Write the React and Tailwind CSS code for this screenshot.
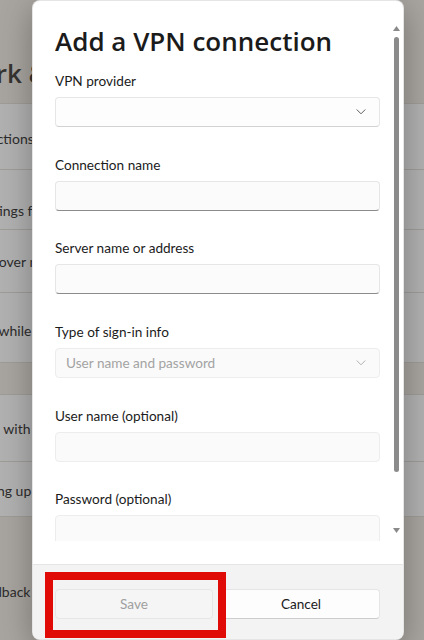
import React from 'react';

const rows = [
    // background settings page (dimmed behind the dialog)
    { text: 'VPN connections', h: 'h-[65px]', pt: 'pt-[25px]', ml: '-ml-[73px]' },
    { text: 'Advanced settings for all VPN connections', h: 'h-[59px]', pt: 'pt-[31px]', ml: '-ml-[88px]' },
    { text: 'Allow VPN over metered networks', h: 'h-[62px]', pt: 'pt-[22px]', ml: '-ml-[71px]' },
    { text: 'Allow VPN while roaming', h: 'h-[69px]', pt: 'pt-[28px]', ml: '-ml-[71px]' },
];

const related = [
    { text: 'Help with VPN', h: 'h-[66px]', pt: 'pt-[24px]', ml: '-ml-[29px]' },
    { text: 'Setting up a VPN', h: 'h-[54px]', pt: 'pt-[19px]', ml: '-ml-[31px]' },
];

function Row({ text, h, pt, ml }) {
    return (
        <div className={`${h} ${pt} bg-[#b2b1b1] overflow-hidden`}>
            <div className={`${ml} whitespace-nowrap text-sm leading-5 text-[#2c2c2c]`}>{text}</div>
        </div>
    );
}

function Chevron({ color = '#5c5c5c' }) {
    return (
        <svg width="10" height="6" viewBox="0 0 10 6" fill="none">
            <path d="M1 0.8 L5 4.8 L9 0.8" stroke={color} strokeWidth="1" strokeLinecap="round" strokeLinejoin="round" />
        </svg>
    );
}

function Field({ label, children }) {
    return (
        <div className="flex flex-col">
            <div className="mb-[6px] text-[13.6px] leading-5 text-[#1b1b1b]">{label}</div>
            {children}
        </div>
    );
}

function TextBox() {
    return <div className="h-[30px] rounded-[4px] border border-[#e6e6e6] border-b-[#8c8c8c] bg-[#fbfbfb]" />;
}

export default function App() {
    return (
        <div className="relative h-[640px] w-[424px] overflow-hidden bg-[#a8a49f] font-['Lato','Open_Sans',sans-serif]">
            {/* Settings page behind */}
            <div className="flex flex-col gap-px bg-[#9f9c98]">
                <div className="h-[103px] overflow-hidden bg-[#a8a49f] pt-[57px]">
                    <div className="-ml-[87px] whitespace-nowrap font-['Open_Sans',sans-serif] text-[26px] font-semibold leading-8 text-[#363431]">
                        Network &amp; internet
                    </div>
                </div>
                {rows.map((r) => (
                    <Row key={r.text} {...r} />
                ))}
                <div className="h-[31px] bg-[#a8a49f]" />
                {related.map((r) => (
                    <Row key={r.text} {...r} />
                ))}
                <div className="h-[123px] overflow-hidden bg-[#a8a49f] pt-[65px]">
                    <div className="-ml-[57px] whitespace-nowrap text-sm leading-5 text-[#2c2c2c]">Give feedback</div>
                </div>
            </div>

            {/* Dialog */}
            <div className="absolute left-[32px] top-0 flex h-[640px] w-[372px] flex-col overflow-hidden rounded-lg border border-black/10 bg-white shadow-[0_8px_32px_rgba(0,0,0,0.3)]">
                <div className="relative h-[540px] overflow-hidden pl-[22px] pr-[23px] pt-[22px]">
                    <h1 className="font-['Open_Sans',sans-serif] text-[26px] font-semibold leading-9 text-[#1b1b1b]">
                        Add a VPN connection
                    </h1>

                    <div className="mt-[12px] flex flex-col gap-[27.7px]">
                        <Field label="VPN provider">
                            <div className="flex h-[30px] items-center justify-end rounded-[4px] border border-[#e6e6e6] border-b-[#d2d2d2] bg-[#fdfdfd] pr-[13px]">
                                <Chevron />
                            </div>
                        </Field>
                        <Field label="Connection name">
                            <TextBox />
                        </Field>
                        <Field label="Server name or address">
                            <TextBox />
                        </Field>
                        <Field label="Type of sign-in info">
                            <div className="flex h-[30px] items-center justify-between rounded-[4px] border border-[#ededed] bg-[#fafafa] pl-[10px] pr-[13px] text-[13.6px] text-[#a3a3a3]">
                                <span>User name and password</span>
                                <Chevron color="#b0b0b0" />
                            </div>
                        </Field>
                        <Field label="User name (optional)">
                            <div className="h-[30px] rounded-[4px] border border-[#ededed] bg-[#fafafa]" />
                        </Field>
                        <Field label="Password (optional)">
                            <div className="h-[30px] rounded-[4px] border border-[#ededed] bg-[#fafafa]" />
                        </Field>
                    </div>

                    {/* scrollbar */}
                    <div className="absolute right-[3px] top-[25px] flex flex-col items-center">
                        <svg width="7" height="5" viewBox="0 0 7 5">
                            <path d="M3.5 0 L7 5 L0 5 Z" fill="#8a8a8a" />
                        </svg>
                        <div className="mt-[6px] h-[435px] w-[5px] rounded-full bg-[#8b8b8b]" />
                        <svg className="mt-[56px]" width="7" height="5" viewBox="0 0 7 5">
                            <path d="M0 0 L7 0 L3.5 5 Z" fill="#8a8a8a" />
                        </svg>
                    </div>
                </div>

                <div className="h-[23px]" />

                <div className="flex flex-1 gap-[9px] border-t border-[#e5e5e5] bg-[#f3f3f3] pl-[22px] pr-[23px] pt-[24px]">
                    <button className="h-[30px] flex-1 rounded-[4px] border border-[#e6e6e6] bg-[#f5f5f5] text-[13.6px] text-[#a0a0a0]">
                        Save
                    </button>
                    <button className="h-[30px] flex-1 rounded-[4px] border border-[#e5e5e5] border-b-[#cdcdcd] bg-[#fdfdfd] text-[13.6px] text-[#1b1b1b]">
                        Cancel
                    </button>
                </div>
            </div>

            {/* highlight */}
            <div className="absolute left-[45px] top-[572px] h-[66px] w-[181px] border-[8px] border-[#e00a06]" />
        </div>
    );
}
